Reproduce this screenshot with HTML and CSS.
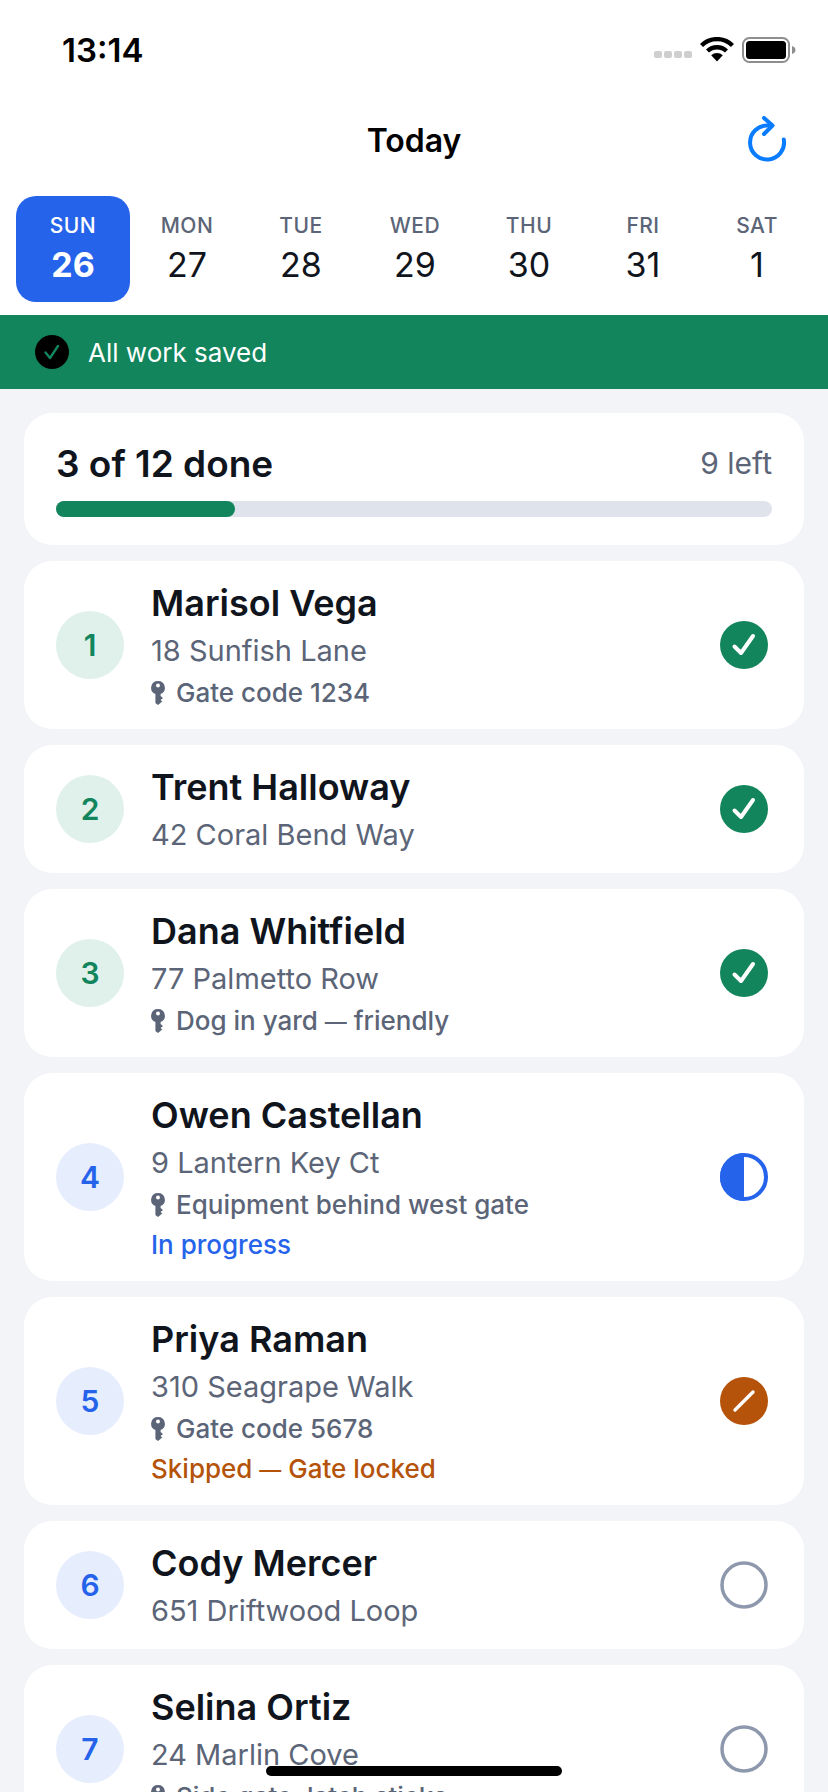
FILE: index.html
```html
<!DOCTYPE html>
<html>
	<head>
		<title>Today</title>
		<meta charset="utf-8">
		<link rel="stylesheet" href="styles.css">
	</head>
	<body>
		<div class="screen">
			<div class="top">
				<div class="statusbar">
					<span class="time">13:14</span>
					<div class="status-icons">
						<div class="signal"><i></i><i></i><i></i><i></i></div>
						<svg class="wifi" width="34" height="26" viewBox="0 0 34 26">
							<path d="M1.5 8.5 A22 22 0 0 1 32.5 8.5" fill="none" stroke="#000" stroke-width="4.4"/>
							<path d="M7.5 14 A14 14 0 0 1 26.5 14" fill="none" stroke="#000" stroke-width="4.4"/>
							<path d="M11.2 18.2 L17 24.5 L22.8 18.2 A8.4 8.4 0 0 0 11.2 18.2 Z" fill="#000"/>
						</svg>
						<svg class="battery" width="54" height="28" viewBox="0 0 54 28">
							<rect x="1" y="2" width="46" height="24" rx="6.5" fill="none" stroke="#8e8e8e" stroke-width="2"/>
							<rect x="4" y="5" width="40" height="18" rx="3.5" fill="#000"/>
							<path d="M50 10 C52.5 10.8 53.5 12 53.5 14 C53.5 16 52.5 17.2 50 18 Z" fill="#8e8e8e"/>
						</svg>
					</div>
				</div>
				<div class="navbar">
					<h1>Today</h1>
					<svg class="refresh" width="40" height="46" viewBox="0 0 40 46">
						<path d="M21 9.5 A17 17 0 1 0 36.8 23.5" fill="none" stroke="#0a7cff" stroke-width="4" stroke-linecap="round"/>
						<path d="M17 2 L25.5 9.5 L17 18" fill="none" stroke="#0a7cff" stroke-width="4" stroke-linecap="round" stroke-linejoin="round"/>
					</svg>
				</div>
				<div class="days">
					<div class="day active"><span class="dow">SUN</span><span class="num">26</span></div>
					<div class="day"><span class="dow">MON</span><span class="num">27</span></div>
					<div class="day"><span class="dow">TUE</span><span class="num">28</span></div>
					<div class="day"><span class="dow">WED</span><span class="num">29</span></div>
					<div class="day"><span class="dow">THU</span><span class="num">30</span></div>
					<div class="day"><span class="dow">FRI</span><span class="num">31</span></div>
					<div class="day"><span class="dow">SAT</span><span class="num">1</span></div>
				</div>
			</div>
			<div class="banner">
				<svg width="34" height="34" viewBox="0 0 34 34">
					<circle cx="17" cy="17" r="17" fill="#000"/>
					<path d="M10.5 17.5 L15 23 L23 11" fill="none" stroke="#12855c" stroke-width="2.4" stroke-linecap="round" stroke-linejoin="round"/>
				</svg>
				<span>All work saved</span>
			</div>
			<div class="list">
				<div class="card summary">
					<div class="summary-row">
						<span class="done">3 of 12 done</span>
						<span class="left">9 left</span>
					</div>
					<div class="bar"><div class="bar-fill" style="width: 25%"></div></div>
				</div>

				<div class="card stop">
					<div class="badge green">1</div>
					<div class="info">
						<div class="name">Marisol Vega</div>
						<div class="addr">18 Sunfish Lane</div>
						<div class="note"><svg class="key" viewBox="0 0 14 24"><use href="#key"/></svg><span>Gate code 1234</span></div>
					</div>
					<svg class="state" viewBox="0 0 48 48"><use href="#st-done"/></svg>
				</div>

				<div class="card stop">
					<div class="badge green">2</div>
					<div class="info">
						<div class="name">Trent Halloway</div>
						<div class="addr">42 Coral Bend Way</div>
					</div>
					<svg class="state" viewBox="0 0 48 48"><use href="#st-done"/></svg>
				</div>

				<div class="card stop">
					<div class="badge green">3</div>
					<div class="info">
						<div class="name">Dana Whitfield</div>
						<div class="addr">77 Palmetto Row</div>
						<div class="note"><svg class="key" viewBox="0 0 14 24"><use href="#key"/></svg><span>Dog in yard <span class="dash">—</span> friendly</span></div>
					</div>
					<svg class="state" viewBox="0 0 48 48"><use href="#st-done"/></svg>
				</div>

				<div class="card stop">
					<div class="badge blue">4</div>
					<div class="info">
						<div class="name">Owen Castellan</div>
						<div class="addr">9 Lantern Key Ct</div>
						<div class="note"><svg class="key" viewBox="0 0 14 24"><use href="#key"/></svg><span>Equipment behind west gate</span></div>
						<div class="flag progress">In progress</div>
					</div>
					<svg class="state" viewBox="0 0 48 48">
						<circle cx="24" cy="24" r="22" fill="none" stroke="#2563eb" stroke-width="4"/>
						<path d="M24 0 A24 24 0 0 0 24 48 Z" fill="#2563eb"/>
					</svg>
				</div>

				<div class="card stop">
					<div class="badge blue">5</div>
					<div class="info">
						<div class="name">Priya Raman</div>
						<div class="addr">310 Seagrape Walk</div>
						<div class="note"><svg class="key" viewBox="0 0 14 24"><use href="#key"/></svg><span>Gate code 5678</span></div>
						<div class="flag skipped">Skipped <span class="dash">—</span> Gate locked</div>
					</div>
					<svg class="state" viewBox="0 0 48 48">
						<circle cx="24" cy="24" r="24" fill="#b45309"/>
						<path d="M15 33 L33 15" fill="none" stroke="#fff" stroke-width="3.4" stroke-linecap="round"/>
					</svg>
				</div>

				<div class="card stop">
					<div class="badge blue">6</div>
					<div class="info">
						<div class="name">Cody Mercer</div>
						<div class="addr">651 Driftwood Loop</div>
					</div>
					<svg class="state" viewBox="0 0 48 48"><use href="#st-todo"/></svg>
				</div>

				<div class="card stop">
					<div class="badge blue">7</div>
					<div class="info">
						<div class="name">Selina Ortiz</div>
						<div class="addr">24 Marlin Cove</div>
						<div class="note"><svg class="key" viewBox="0 0 14 24"><use href="#key"/></svg><span>Side gate, latch sticks</span></div>
					</div>
					<svg class="state" viewBox="0 0 48 48"><use href="#st-todo"/></svg>
				</div>
			</div>
			<div class="home-indicator"></div>
		</div>

		<svg class="defs" width="0" height="0">
			<defs>
				<g id="key">
					<path fill-rule="evenodd" d="M7 0 A6.8 6.8 0 0 1 9.6 13.1 L9.6 15 L12 17 L9.6 19 L11.2 20.6 L7 24 L4.4 22 L4.4 13.1 A6.8 6.8 0 0 1 7 0 Z M7 2.6 A2 2 0 1 0 7 6.6 A2 2 0 1 0 7 2.6 Z" fill="#5b6577"/>
				</g>
				<g id="st-done">
					<circle cx="24" cy="24" r="24" fill="#12855c"/>
					<path d="M14.5 25.5 L21 32 L33 15" fill="none" stroke="#fff" stroke-width="4" stroke-linecap="round" stroke-linejoin="round"/>
				</g>
				<g id="st-todo">
					<circle cx="24" cy="24" r="22" fill="none" stroke="#8e98ac" stroke-width="3.5"/>
				</g>
			</defs>
		</svg>
	</body>
</html>
```

FILE: styles.css
```css
* {
	box-sizing: border-box;
}
html, body {
	margin: 0;
	padding: 0;
}
body {
	font-family: Inter, "Liberation Sans", sans-serif;
	background: #f3f4f8;
	color: #10141c;
}
.screen {
	position: relative;
	width: 828px;
	height: 1792px;
	overflow: hidden;
	background: #f3f4f8;
}
.defs {
	position: absolute;
}

/* top */
.top {
	background: #fff;
	height: 315px;
}
.statusbar {
	height: 100px;
	display: flex;
	align-items: center;
	justify-content: space-between;
	padding: 0 32px 0 62px;
}
.time {
	font-size: 33px;
	font-weight: 600;
	color: #000;
}
.status-icons {
	display: flex;
	align-items: center;
	gap: 8px;
}
.signal {
	display: flex;
	gap: 2px;
	margin-top: 8px;
}
.signal i {
	display: block;
	width: 8px;
	height: 7px;
	border-radius: 2px;
	background: #cfcfcf;
}
.navbar {
	position: relative;
	height: 96px;
	display: flex;
	align-items: center;
	justify-content: center;
	padding-bottom: 16px;
}
.navbar h1 {
	margin: 0;
	font-size: 32px;
	font-weight: 600;
	color: #000;
}
.refresh {
	position: absolute;
	right: 41px;
	top: 16px;
}
.days {
	display: grid;
	grid-template-columns: repeat(7, 114px);
	padding-left: 16px;
	height: 106px;
}
.day {
	display: flex;
	flex-direction: column;
	align-items: center;
	padding-top: 16px;
	border-radius: 20px;
}
.dow {
	font-size: 21px;
	font-weight: 500;
	line-height: 28px;
	letter-spacing: 0.5px;
	color: #5b6577;
}
.num {
	font-size: 34px;
	line-height: 50px;
	color: #10141c;
}
.day.active {
	background: #2563eb;
}
.day.active .dow {
	color: #fff;
}
.day.active .num {
	color: #fff;
	font-weight: 700;
}

/* banner */
.banner {
	height: 74px;
	background: #12855c;
	display: flex;
	align-items: center;
	gap: 19px;
	padding-left: 35px;
	color: #fff;
	font-size: 26px;
}

/* list */
.list {
	display: flex;
	flex-direction: column;
	gap: 16px;
	padding: 24px 24px 0;
}
.card {
	background: #fff;
	border-radius: 28px;
}
.summary {
	height: 132px;
	padding: 24px 32px 0;
}
.summary-row {
	display: flex;
	align-items: center;
	justify-content: space-between;
	height: 52px;
	margin-bottom: 12px;
}
.done {
	font-size: 37px;
	font-weight: 600;
}
.left {
	font-size: 30px;
	color: #5b6577;
}
.bar {
	height: 16px;
	border-radius: 8px;
	background: #dfe3ec;
}
.bar-fill {
	height: 100%;
	border-radius: 8px;
	background: #12855c;
}
.stop {
	display: flex;
	align-items: center;
	flex-shrink: 0;
	padding: 16px 36px 16px 32px;
}
.badge {
	width: 68px;
	height: 68px;
	flex-shrink: 0;
	border-radius: 50%;
	display: flex;
	align-items: center;
	justify-content: center;
	font-size: 30px;
	font-weight: 600;
	margin-right: 27px;
}
.badge.green {
	background: #e0f0ea;
	color: #12855c;
}
.badge.blue {
	background: #e6edfc;
	color: #2563eb;
}
.info {
	flex: 1;
	min-width: 0;
}
.name {
	font-size: 36px;
	font-weight: 600;
	line-height: 52px;
	color: #10141c;
}
.addr {
	font-size: 29px;
	line-height: 44px;
	color: #5b6577;
}
.note {
	display: flex;
	align-items: center;
	font-size: 26px;
	font-weight: 500;
	line-height: 40px;
	color: #5b6577;
}
.dash {
	font-size: 22px;
	line-height: 0;
}
.key {
	width: 14px;
	height: 24px;
	margin-right: 11px;
}
.flag {
	font-size: 26px;
	font-weight: 500;
	line-height: 40px;
}
.flag.progress {
	color: #2563eb;
}
.flag.skipped {
	color: #b45309;
}
.state {
	width: 48px;
	height: 48px;
	flex-shrink: 0;
}
.home-indicator {
	position: absolute;
	left: 266px;
	top: 1766px;
	width: 296px;
	height: 10px;
	border-radius: 5px;
	background: #000;
}
```
